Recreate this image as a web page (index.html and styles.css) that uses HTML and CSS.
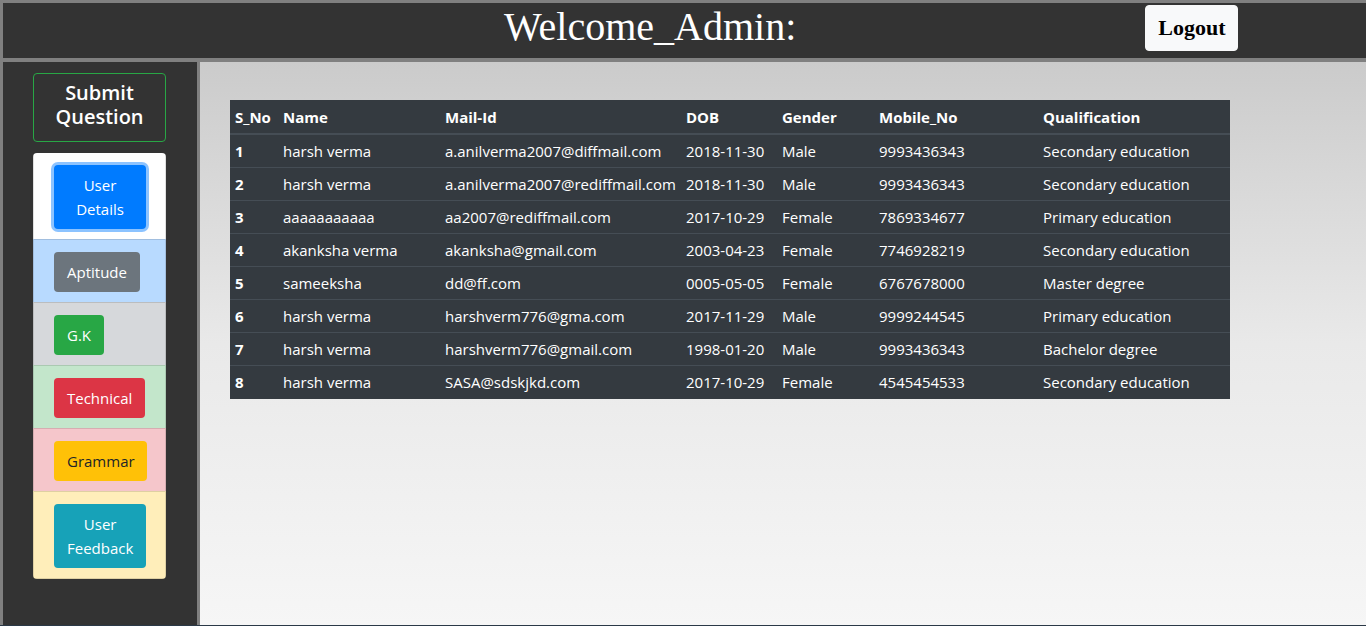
FILE: index.html
```html
<!DOCTYPE html>
<html lang="en">
<head>
<meta charset="utf-8">
<title>Admin</title>
<link rel="stylesheet" href="styles.css">
</head>
<body>
<div class="page">
  <header class="topbar">
    <h1 class="title">Welcome_Admin:</h1>
    <button class="logout">Logout</button>
  </header>
  <div class="body">
    <aside class="sidebar">
      <div class="submit">Submit Question</div>
      <ul class="menu">
        <li class="item item-white"><button class="btn btn-blue">User Details</button></li>
        <li class="item item-primary"><button class="btn btn-gray">Aptitude</button></li>
        <li class="item item-secondary"><button class="btn btn-green">G.K</button></li>
        <li class="item item-success"><button class="btn btn-red">Technical</button></li>
        <li class="item item-danger"><button class="btn btn-yellow">Grammar</button></li>
        <li class="item item-warning"><button class="btn btn-teal">User Feedback</button></li>
      </ul>
    </aside>
    <main class="main">
      <table class="grid">
        <colgroup>
          <col class="c1"><col class="c2"><col class="c3"><col class="c4"><col class="c5"><col class="c6"><col class="c7">
        </colgroup>
        <thead>
          <tr><th>S_No</th><th>Name</th><th>Mail-Id</th><th>DOB</th><th>Gender</th><th>Mobile_No</th><th>Qualification</th></tr>
        </thead>
        <tbody>
          <tr><th>1</th><td>harsh verma</td><td>a.anilverma2007@diffmail.com</td><td>2018-11-30</td><td>Male</td><td>9993436343</td><td>Secondary education</td></tr>
          <tr><th>2</th><td>harsh verma</td><td>a.anilverma2007@rediffmail.com</td><td>2018-11-30</td><td>Male</td><td>9993436343</td><td>Secondary education</td></tr>
          <tr><th>3</th><td>aaaaaaaaaaa</td><td>aa2007@rediffmail.com</td><td>2017-10-29</td><td>Female</td><td>7869334677</td><td>Primary education</td></tr>
          <tr><th>4</th><td>akanksha verma</td><td>akanksha@gmail.com</td><td>2003-04-23</td><td>Female</td><td>7746928219</td><td>Secondary education</td></tr>
          <tr><th>5</th><td>sameeksha</td><td>dd@ff.com</td><td>0005-05-05</td><td>Female</td><td>6767678000</td><td>Master degree</td></tr>
          <tr><th>6</th><td>harsh verma</td><td>harshverm776@gma.com</td><td>2017-11-29</td><td>Male</td><td>9999244545</td><td>Primary education</td></tr>
          <tr><th>7</th><td>harsh verma</td><td>harshverm776@gmail.com</td><td>1998-01-20</td><td>Male</td><td>9993436343</td><td>Bachelor degree</td></tr>
          <tr><th>8</th><td>harsh verma</td><td>SASA@sdskjkd.com</td><td>2017-10-29</td><td>Female</td><td>4545454533</td><td>Secondary education</td></tr>
        </tbody>
      </table>
    </main>
  </div>
</div>
</body>
</html>
```
FILE: styles.css
```css
* { box-sizing: border-box; }
html, body { margin: 0; padding: 0; }
body {
  background: #2b3947;
  font-family: "Open Sans", "Noto Sans", sans-serif;
  color: #fff;
}
.page {
  height: 625px;
  display: flex;
  flex-direction: column;
  overflow: hidden;
}
.topbar {
  flex: 0 0 auto;
  height: 62px;
  background: #333;
  border: 3px solid #808080;
  border-right: none;
  border-bottom-width: 4px;
  display: flex;
  align-items: flex-start;
  padding-left: 501px;
}
.title {
  margin: 0;
  font-family: "Liberation Serif", "Times New Roman", serif;
  font-weight: 400;
  font-size: 40px;
  line-height: 48px;
  color: #fff;
}
.logout {
  margin-left: 349px;
  margin-top: 2px;
  background: #f8f9fa;
  border: 1px solid #f8f9fa;
  border-radius: 4px;
  font-family: "Liberation Serif", "Times New Roman", serif;
  font-weight: 700;
  font-size: 22px;
  line-height: 28px;
  padding: 8px 12px;
  color: #000;
  height: 46px;
  width: 93px;
}
.body {
  flex: 1 1 auto;
  display: flex;
  min-height: 0;
}
.sidebar {
  flex: 0 0 200px;
  background: #333;
  border-left: 3px solid #808080;
  border-right: 3px solid #808080;
  padding: 11px 0 0 30px;
}
.submit {
  width: 133px;
  height: 69px;
  border: 1px solid #28a745;
  border-radius: 4px;
  font-size: 20px;
  font-weight: 600;
  line-height: 24px;
  text-align: center;
  padding-top: 7px;
  color: #fff;
}
.menu {
  list-style: none;
  margin: 11px 0 0 0;
  padding: 0;
  width: 133px;
  border-radius: 4px;
  overflow: hidden;
}
.item {
  padding: 12px 19px 10px 20px;
  border-top: 1px solid rgba(0,0,0,.125);
  border-left: 1px solid rgba(0,0,0,.125);
  border-right: 1px solid rgba(0,0,0,.125);
}
.item:first-child { border-top: none; }
.item:last-child { border-bottom: 1px solid rgba(0,0,0,.125); }
.item-white { background: #fff; }
.item-primary { background: #b8daff; }
.item-secondary { background: #d6d8db; }
.item-success { background: #c3e6cb; }
.item-danger { background: #f5c6cb; }
.item-warning { background: #ffeeba; }
.btn {
  display: inline-block;
  font-family: "Open Sans", "Noto Sans", sans-serif;
  font-size: 15px;
  line-height: 24px;
  padding: 7px 12px;
  border: 1px solid transparent;
  border-radius: 4px;
  color: #fff;
  text-align: center;
  max-width: 93px;
}
.btn-blue { background: #007bff; box-shadow: 0 0 0 3px rgba(0,123,255,.45); }
.btn-gray { background: #6c757d; }
.btn-green { background: #28a745; }
.btn-red { background: #dc3545; }
.btn-yellow { background: #ffc107; color: #212529; }
.btn-teal { background: #17a2b8; }
.main {
  flex: 1 1 auto;
  background: linear-gradient(to bottom, #cbcbcb 0%, #e9e9e9 50%, #f6f6f6 100%);
  padding: 38px 0 0 30px;
}
.grid {
  width: 1000px;
  table-layout: fixed;
  border-collapse: collapse;
  background: #343a40;
  color: #fff;
  font-size: 15px;
  line-height: 24px;
}
.c1 { width: 48px; }
.c2 { width: 162px; }
.c3 { width: 241px; }
.c4 { width: 96px; }
.c5 { width: 97px; }
.c6 { width: 164px; }
.c7 { width: 192px; }
.grid th, .grid td {
  text-align: left;
  padding: 4px 5px;
  white-space: nowrap;
  overflow: hidden;
  border-top: 1px solid #454d55;
  height: 33px;
}
.grid th { font-weight: 700; }
.grid tbody td { font-weight: 400; }
.grid thead th { border-top: none; border-bottom: 2px solid #454d55; height: 34px; }
.grid tbody tr:first-child th, .grid tbody tr:first-child td { border-top: none; }
```
